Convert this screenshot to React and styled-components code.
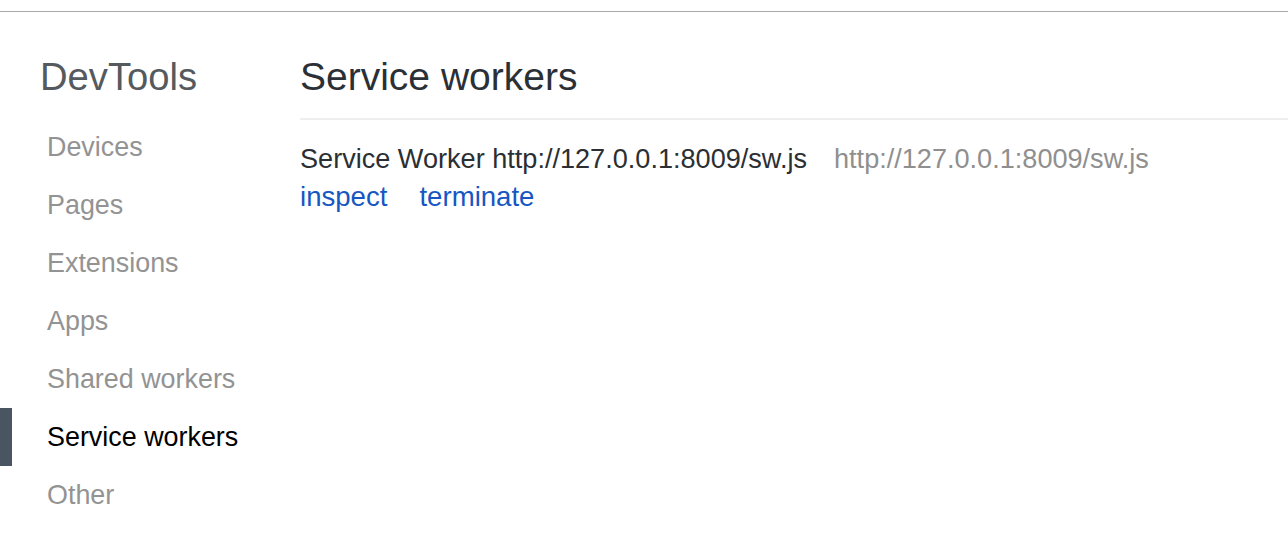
import React from 'react';
import styled, { createGlobalStyle } from 'styled-components';

const GlobalStyle = createGlobalStyle`
  html, body {
    margin: 0;
    padding: 0;
    background: #fff;
    font-family: "Liberation Sans", Arial, Helvetica, sans-serif;
  }
`;

const Page = styled.div`
  width: 1288px;
  height: 556px;
  overflow: hidden;
  border-top: 1px solid #aaa;
  margin-top: 11px;
  box-sizing: border-box;
  display: flex;
`;

const Sidebar = styled.nav`
  width: 300px;
  flex-shrink: 0;
  padding-top: 43px;
`;

const Brand = styled.h1`
  margin: 0 0 0 40px;
  font-size: 38.2px;
  font-weight: 400;
  line-height: 44px;
  color: #555a5f;
`;

const NavList = styled.ul`
  list-style: none;
  margin: 19px 0 0;
  padding: 0;
`;

const NavItem = styled.li`
  position: relative;
  height: 58px;
  line-height: 58px;
  padding-left: 47px;
  font-size: 26.9px;
  color: ${(p) => (p.$active ? '#000' : '#939393')};

  &::before {
    content: '';
    display: ${(p) => (p.$active ? 'block' : 'none')};
    position: absolute;
    left: 0;
    top: 0;
    width: 12px;
    height: 58px;
    background: #4a5562;
  }
`;

const Main = styled.main`
  flex: 1;
  padding-top: 43px;
`;

const Title = styled.h2`
  margin: 0;
  font-size: 39px;
  font-weight: 400;
  line-height: 44px;
  color: #2b3036;
  padding-bottom: 19px;
  border-bottom: 2px solid #eeeeee;
`;

const Worker = styled.div`
  padding-top: 20px;
  font-size: 27.1px;
`;

const WorkerRow = styled.div`
  display: flex;
  gap: 27px;
  line-height: 38px;
`;

const Name = styled.span`
  color: #2b2f33;
`;

const Url = styled.span`
  color: #8f8f8f;
`;

const Actions = styled.div`
  display: flex;
  gap: 32px;
  line-height: 38px;
  font-size: 27.6px;
`;

const ActionLink = styled.a`
  color: #1757c2;
  text-decoration: none;
  cursor: pointer;
`;

const navItems = ['Devices', 'Pages', 'Extensions', 'Apps', 'Shared workers', 'Service workers', 'Other'];

export default function App() {
  return (
    <>
      <GlobalStyle />
      <Page>
        <Sidebar>
          <Brand>DevTools</Brand>
          <NavList>
            {navItems.map((item) => (
              <NavItem key={item} $active={item === 'Service workers'}>
                {item}
              </NavItem>
            ))}
          </NavList>
        </Sidebar>
        <Main>
          <Title>Service workers</Title>
          <Worker>
            <WorkerRow>
              <Name>Service Worker http://127.0.0.1:8009/sw.js</Name>
              <Url>http://127.0.0.1:8009/sw.js</Url>
            </WorkerRow>
            <Actions>
              <ActionLink>inspect</ActionLink>
              <ActionLink>terminate</ActionLink>
            </Actions>
          </Worker>
        </Main>
      </Page>
    </>
  );
}
